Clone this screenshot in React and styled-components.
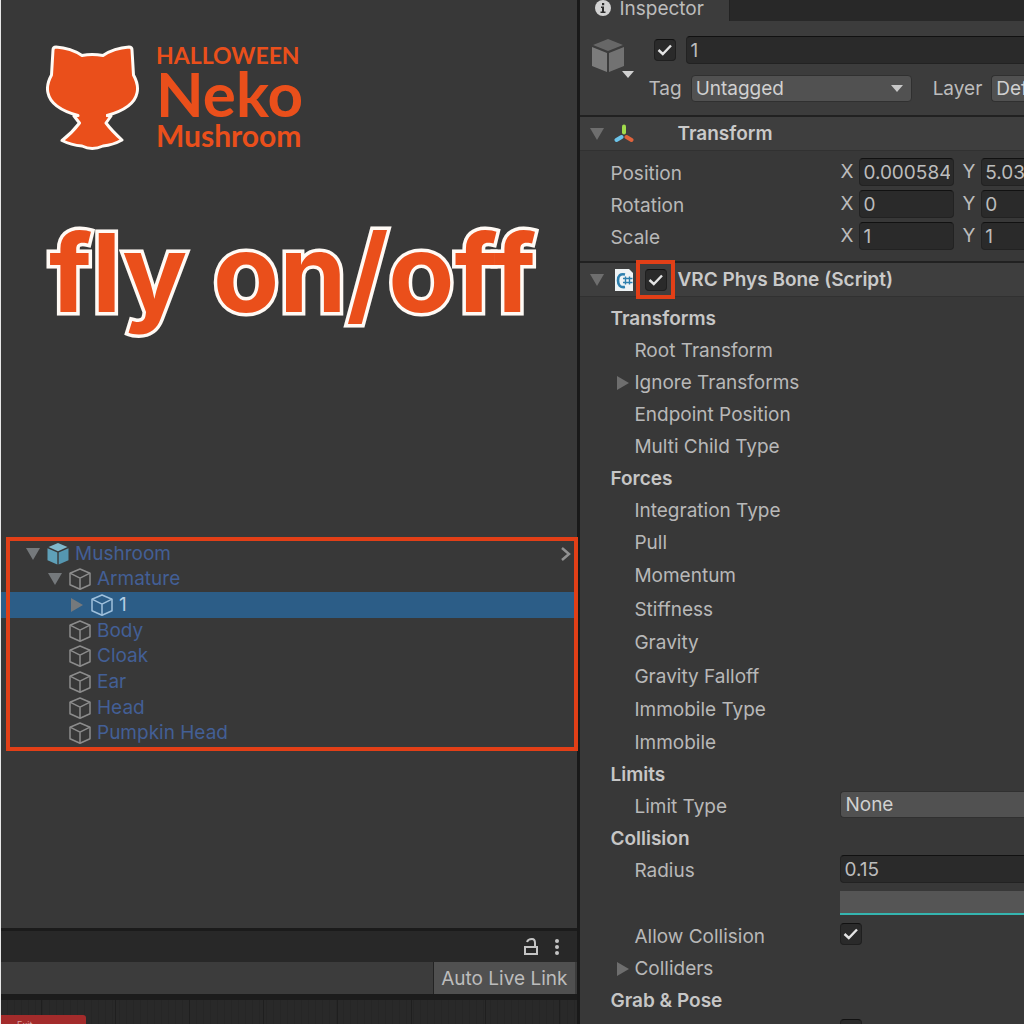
import styled, { createGlobalStyle, css } from 'styled-components'

const treeItems = [
  { name: 'Mushroom', level: 0, open: true, root: true },
  { name: 'Armature', level: 1, open: true },
  { name: '1', level: 2, closed: true, selected: true },
  { name: 'Body', level: 1 },
  { name: 'Cloak', level: 1 },
  { name: 'Ear', level: 1 },
  { name: 'Head', level: 1 },
  { name: 'Pumpkin Head', level: 1 },
]

const vectors = [
  { name: 'Position', x: '0.0005846', y: '5.03' },
  { name: 'Rotation', x: '0', y: '0' },
  { name: 'Scale', x: '1', y: '1' },
]

const properties = [
  { name: 'Transforms', title: true },
  { name: 'Root Transform' },
  { name: 'Ignore Transforms', fold: true },
  { name: 'Endpoint Position' },
  { name: 'Multi Child Type' },
  { name: 'Forces', title: true },
  { name: 'Integration Type' },
  { name: 'Pull' },
  { name: 'Momentum', height: 34 },
  { name: 'Stiffness', height: 33 },
  { name: 'Gravity', height: 34 },
  { name: 'Gravity Falloff', height: 33 },
  { name: 'Immobile Type', height: 34 },
  { name: 'Immobile' },
  { name: 'Limits', title: true },
  { name: 'Limit Type', field: 'select' },
  { name: 'Collision', title: true },
  { name: 'Radius', field: 'text' },
  { name: '', field: 'curve', height: 34 },
  { name: 'Allow Collision', field: 'check' },
  { name: 'Colliders', fold: true },
  { name: 'Grab & Pose', title: true },
  { name: '', field: 'check' },
]

const toId = (name) => name.toLowerCase().replace(/ /g, '-')

const Arrow = ({ open }) => (
  <ArrowSvg viewBox="0 0 14 14">
    <path d={open ? 'M0 1h14L7 13z' : 'M1 0v14l12-7z'} />
  </ArrowSvg>
)

const CubeOutline = () => (
  <CubeSvg viewBox="0 0 22 22" fill="none" stroke="currentColor" strokeWidth="1.500" strokeLinejoin="round">
    <path d="M11 1l10 4.200v11.500L11 21.200 1 16.700V5.200z" />
    <path d="M1 5.200l10 5 10-5M11 10.200v11" />
  </CubeSvg>
)

const CubeSolid = () => (
  <CubeSvg viewBox="0 0 22 22">
    <path fill="#7fb8cc" d="M11 0l9.500 4L11 8.300 1.500 4z" />
    <path fill="#5fa0b8" d="M.5 5.200l9.800 4.300v12L.5 17.300z" />
    <path fill="#5596b0" d="M21.500 5.200l-9.800 4.300v12l9.800-4.200z" />
  </CubeSvg>
)

const Check = (props) => (
  <CheckBox>
    <input type="checkbox" defaultChecked {...props} />
    <svg viewBox="0 0 22 22" fill="none" stroke="#e4e4e4" strokeWidth="2.400">
      <path d="M4.500 11l4.300 4L17 6.500" />
    </svg>
  </CheckBox>
)

const CatLogo = () => (
  <svg width="94" height="108" viewBox="0 0 94 108">
    <path
      d="M7 7Q7 4 10 4 25 5 36 12.500 46 10.500 57 12.500 68 5 83 4 86 4 86 7L87.500 32Q93 42 91 50 88 65 61 72.500L65 73 60 80Q66 88 76 97 67 102 57 103 46 108 36 103 25 102 16 97.500 26 90 33.500 80L28 73 32 72.500Q5 65 2 50 0 42 5.500 32z"
      fill="#ea4f1b"
      stroke="#fffaf5"
      strokeWidth="3"
      strokeLinejoin="round"
    />
    <path d="M34 68h26v9H34z" fill="#ea4f1b" />
  </svg>
)

const Field = ({ name, field }) => {
  const id = name ? toId(name) : undefined
  if (field === 'select') {
    return (
      <WideSelect id={id}>
        <option>None</option>
      </WideSelect>
    )
  }
  if (field === 'text') return <WideInput id={id} defaultValue="0.15" />
  if (field === 'curve') return <Curve type="button" aria-label="Radius curve" />
  if (field === 'check') return <Check id={id} aria-label={name ? undefined : 'Allow Grabbing'} />
  return null
}

const Hierarchy = () => (
  <Tree>
    {treeItems.map((item) => (
      <TreeRow key={item.name} $level={item.level} $selected={item.selected}>
        <ArrowSlot>{(item.open || item.closed) && <Arrow open={item.open} />}</ArrowSlot>
        {item.root ? <CubeSolid /> : <CubeOutline />}
        <TreeName $selected={item.selected}>{item.name}</TreeName>
        {item.root && (
          <Chevron viewBox="0 0 10 16" fill="none" stroke="#909090" strokeWidth="2.500">
            <path d="M1 2l7 6-7 6" />
          </Chevron>
        )}
      </TreeRow>
    ))}
    <TreeFrame />
  </Tree>
)

const Inspector = () => (
  <InspectorPanel>
    <TabBar>
      <Tab>
        <svg width="16" height="16" viewBox="0 0 16 16">
          <circle cx="8" cy="8" r="8" fill="#d2d2d2" />
          <path d="M6 6.500h3v5h1.500V13h-5v-1.500H7V8H6zM7 3h2.200v2.200H7z" fill="#2c2c2c" />
        </svg>
        Inspector
      </Tab>
    </TabBar>

    <ObjectHeader>
      <ObjectIcon width="44" height="42" viewBox="0 0 44 42">
        <path d="M16 1l15 6-15 6L1 7z" fill="#676767" />
        <path d="M0 9l15 6v19L0 28z" fill="#7c7c7c" />
        <path d="M32 9l-15 6v19l15-6z" fill="#727272" />
        <path d="M30 33h12l-6 7z" fill="#d0d0d0" />
      </ObjectIcon>
      <HeaderLines>
        <NameLine>
          <Check aria-label="Active" />
          <WideInput aria-label="Name" defaultValue="1" />
        </NameLine>
        <TagLine>
          <label htmlFor="tag">Tag</label>
          <TagSelect>
            <Select id="tag">
              <option>Untagged</option>
            </Select>
            <svg width="12" height="8" viewBox="0 0 12 8">
              <path d="M0 0h12L6 7z" fill="#c8c8c8" />
            </svg>
          </TagSelect>
          <label htmlFor="layer">Layer</label>
          <LayerSelect id="layer">
            <option>Default</option>
          </LayerSelect>
        </TagLine>
      </HeaderLines>
    </ObjectHeader>

    <ComponentBar>
      <Arrow open />
      <BarIcon viewBox="0 0 20 20" strokeWidth="4" strokeLinecap="round">
        <path d="M10 2.500v6" stroke="#a2dc4c" />
        <path d="M7.500 13L2.500 16" stroke="#6cc4ea" />
        <path d="M12.500 13l5 3" stroke="#e0633c" />
      </BarIcon>
      <CheckSlot />
      <h2>Transform</h2>
    </ComponentBar>
    <Vectors>
      {vectors.map((v) => (
        <Row key={v.name}>
          <Label>{v.name}</Label>
          <AxisLabel>
            X <VectorInput defaultValue={v.x} aria-label={`${v.name} X`} />
          </AxisLabel>
          <AxisLabel>
            Y <VectorInput defaultValue={v.y} aria-label={`${v.name} Y`} />
          </AxisLabel>
        </Row>
      ))}
    </Vectors>

    <ComponentBar>
      <Arrow open />
      <BarIcon viewBox="0 0 20 22">
        <path d="M1 0h14l4 4v18H1z" fill="#eef3f5" />
        <path d="M11 5.500Q4 4 4 11.500T11 18" fill="none" stroke="#2d7fae" strokeWidth="2.600" />
        <path d="M11.500 7.500v8M15.500 7.500v8M9 9.500h9.500M9 13.500h9.500" fill="none" stroke="#2d7fae" strokeWidth="1.400" />
      </BarIcon>
      <CheckSlot $marked>
        <Check aria-label="Enabled" />
      </CheckSlot>
      <h2>VRC Phys Bone (Script)</h2>
    </ComponentBar>
    <Properties>
      {properties.map((p, i) => (
        <Row key={i} $height={p.height}>
          <Label
            as={p.field && p.name ? 'label' : 'span'}
            htmlFor={p.field && p.name ? toId(p.name) : undefined}
            $title={p.title}
          >
            {p.fold && (
              <FoldSlot>
                <Arrow />
              </FoldSlot>
            )}
            {p.name}
          </Label>
          <Field {...p} />
        </Row>
      ))}
    </Properties>
  </InspectorPanel>
)

const App = () => {
  return (
    <Page>
      <GlobalStyle />
      <LeftPanel>
        <Brand>
          <CatLogo />
          <BrandText>
            <BrandLine $size={23} $line={24}>HALLOWEEN</BrandLine>
            <BrandLine $size={62} $line={52}>Neko</BrandLine>
            <BrandLine $size={30} $line={32}>Mushroom</BrandLine>
          </BrandText>
        </Brand>
        <Title>fly on/off</Title>
        <Hierarchy />
        <Animator>
          <AnimatorTabs>
            <svg width="14" height="18" viewBox="0 0 14 18" fill="none" stroke="#c4c4c4" strokeWidth="2">
              <path d="M1 9h12v7H1zM3 4q1-3 5-3 3 0 3 4v4" />
            </svg>
            <svg width="6" height="18" viewBox="0 0 6 18" fill="#c4c4c4">
              <circle cx="3" cy="3" r="2" />
              <circle cx="3" cy="9" r="2" />
              <circle cx="3" cy="15" r="2" />
            </svg>
          </AnimatorTabs>
          <AnimatorTools>
            <LiveLink type="button">Auto Live Link</LiveLink>
          </AnimatorTools>
          <Graph>
            <ExitNode>Exit</ExitNode>
          </Graph>
        </Animator>
      </LeftPanel>
      <Inspector />
    </Page>
  )
}
export default App

const GlobalStyle = createGlobalStyle`
  * {
    box-sizing: border-box;
  }
  body {
    margin: 0;
    background: #383838;
    color: #bcbcbc;
    font-family: Inter, 'Liberation Sans', sans-serif;
    font-size: 19px;
    line-height: 24px;
  }
  input, select, button {
    font: inherit;
    color: inherit;
    margin: 0;
  }
  svg {
    flex: none;
  }
`;
const Page = styled.main`
  display: grid;
  grid-template-columns: minmax(0, 145fr) minmax(0, 111fr);
  height: 100vh;
  overflow: hidden;
  border-left: 1px solid #e8e8e8;
`;
const LeftPanel = styled.section`
  display: flex;
  flex-direction: column;
  min-height: 0;
  border-right: 3px solid #191919;
`;
const Brand = styled.div`
  display: flex;
  gap: 16px;
  padding: 43px 45px 0;
`;
const BrandText = styled.div`
  color: #ea4f1b;
  font-family: Lato, sans-serif;
  font-weight: 700;
`;
const BrandLine = styled.div`
  font-size: ${(p) => p.$size}px;
  line-height: ${(p) => p.$line}px;
`;
const Title = styled.h1`
  margin: 58px 0 0;
  padding-left: 48px;
  color: #ea4f1b;
  font-size: 108px;
  line-height: 128px;
  font-weight: 700;
  font-variant-ligatures: none;
  white-space: nowrap;
  -webkit-text-stroke: 7px #fffaf5;
  paint-order: stroke fill;
  stroke-linejoin: round;
`;
const Tree = styled.div`
  position: relative;
  display: grid;
  grid-auto-rows: 1fr;
  height: 205px;
  margin-top: 204px;
`;
const TreeFrame = styled.div`
  position: absolute;
  inset: -4px -1px -5px 5px;
  border: 4px solid #e23f17;
  pointer-events: none;
`;
const TreeRow = styled.div`
  display: flex;
  align-items: center;
  padding-left: ${(p) => 25 + p.$level * 22}px;
  padding-right: 6px;
  color: ${(p) => (p.$selected ? '#9fc0dc' : '#8c8c8c')};
  background: ${(p) => (p.$selected ? '#2c5d87' : 'transparent')};
`;
const TreeName = styled.span`
  flex: 1;
  margin-left: 6px;
  color: ${(p) => (p.$selected ? '#b4cde2' : '#435f96')};
`;
const ArrowSlot = styled.span`
  display: flex;
  width: 21px;
`;
const ArrowSvg = styled.svg`
  width: 14px;
  height: 14px;
  fill: #6e6e6e;
  ${TreeRow} & {
    fill: #75797c;
  }
`;
const CubeSvg = styled.svg`
  width: 22px;
  height: 22px;
`;
const Chevron = styled.svg`
  width: 10px;
  height: 16px;
`;
const Animator = styled.div`
  display: grid;
  grid-template-rows: 31px 32px 30px;
  margin-top: auto;
  border-top: 3px solid #1b1b1b;
`;
const AnimatorTabs = styled.div`
  display: flex;
  justify-content: flex-end;
  align-items: center;
  gap: 16px;
  padding-right: 17px;
  background: #282828;
`;
const AnimatorTools = styled.div`
  display: flex;
  justify-content: flex-end;
  padding-right: 2px;
  background: #3c3c3c;
`;
const LiveLink = styled.button`
  padding: 2px 8px 0 7px;
  border: 0;
  border-left: 1px solid #232323;
  background: #505050;
`;
const Graph = styled.div`
  overflow: hidden;
  padding-top: 15px;
  border-top: 6px solid #1c1c1c;
  background:
    repeating-linear-gradient(90deg, transparent 0 40px, #1f1f1f 40px 41px, transparent 41px 74px),
    repeating-linear-gradient(90deg, #292929 0 6px, #262626 6px 7px);
`;
const ExitNode = styled.div`
  width: 85px;
  height: 24px;
  padding: 4px 16px;
  border-radius: 0 3px 0 0;
  background: #a32b2b;
  color: #d6a0a0;
  font-size: 9px;
  line-height: 12px;
`;
const InspectorPanel = styled.section`
  min-width: 0;
  overflow: hidden;
`;
const TabBar = styled.div`
  display: flex;
  height: 21px;
  background: #282828;
`;
const Tab = styled.div`
  display: flex;
  gap: 8px;
  width: 150px;
  padding-left: 15px;
  background: #3c3c3c;
  border-right: 1px solid #222;
  line-height: 17px;
`;
const fieldBox = css`
  height: 28px;
  border: 1px solid #222;
  border-top-color: #111;
  border-radius: 4px;
  background: #2a2a2a;
  padding: 0 3px;
  outline: 0;
`;
const WideInput = styled.input`
  ${fieldBox}
  flex: 1;
  min-width: 0;
  border-right: 0;
  border-radius: 4px 0 0 4px;
`;
const Select = styled.select`
  appearance: none;
  width: 100%;
  height: 27px;
  padding: 0 4px;
  border: 1px solid #303030;
  border-radius: 4px;
  background: #515151;
  color: #d0d0d0;
`;
const WideSelect = styled(Select)`
  flex: 1;
  min-width: 0;
  border-right: 0;
  border-radius: 4px 0 0 4px;
`;
const LayerSelect = styled(WideSelect)`
  padding-right: 0;
  text-overflow: clip;
`;
const CheckBox = styled.span`
  position: relative;
  display: flex;
  width: 22px;
  height: 22px;
  input {
    appearance: none;
    width: 100%;
    height: 100%;
    border: 1px solid #1f1f1f;
    border-top-color: #111;
    border-radius: 4px;
    background: #2a2a2a;
  }
  svg {
    position: absolute;
    inset: 0;
    pointer-events: none;
  }
  input:not(:checked) + svg {
    display: none;
  }
`;
const ObjectHeader = styled.header`
  display: flex;
  height: 94px;
  padding: 15px 0 0 12px;
  background: #3c3c3c;
`;
const ObjectIcon = styled.svg`
  margin-top: 2px;
`;
const HeaderLines = styled.div`
  flex: 1;
  min-width: 0;
  padding-left: 12px;
`;
const NameLine = styled.div`
  display: flex;
  align-items: center;
  gap: 10px;
  padding-left: 6px;
`;
const TagLine = styled.div`
  display: flex;
  align-items: center;
  gap: 9px;
  margin-top: 11px;
`;
const TagSelect = styled.div`
  position: relative;
  flex: none;
  width: 221px;
  margin-right: 12px;
  svg {
    position: absolute;
    top: 10px;
    right: 9px;
    pointer-events: none;
  }
`;
const ComponentBar = styled.div`
  display: flex;
  align-items: center;
  height: 36px;
  padding-left: 10px;
  border-top: 2px solid #212121;
  border-bottom: 1px solid #313131;
  background: #3e3e3e;
  h2 {
    margin: 0;
    color: #cacaca;
    font-size: 19px;
    font-weight: 600;
    white-space: nowrap;
  }
`;
const BarIcon = styled.svg`
  width: 20px;
  height: 22px;
  margin-left: 10px;
`;
const CheckSlot = styled.span`
  display: flex;
  flex: none;
  align-items: center;
  justify-content: center;
  width: 39px;
  height: 39px;
  margin: 0 2px;
  border: 4px solid ${(p) => (p.$marked ? '#e23f17' : 'transparent')};
`;
const Vectors = styled.div`
  padding: 7px 0 7px 30px;
`;
const Properties = styled.div`
  padding: 6px 0 0 30px;
`;
const Row = styled.div`
  display: flex;
  align-items: flex-start;
  height: ${(p) => p.$height || 32}px;
  ${Properties} & > ${CheckBox} {
    margin-top: 2px;
  }
`;
const Label = styled.span`
  display: flex;
  flex: none;
  align-items: center;
  width: 230px;
  height: 100%;
  white-space: nowrap;
  font-weight: ${(p) => (p.$title ? 600 : 400)};
  color: ${(p) => (p.$title ? '#c6c6c6' : '#b8b8b8')};
  ${Properties} & {
    padding-left: ${(p) => (p.$title ? 0 : 24)}px;
  }
`;
const FoldSlot = styled.span`
  display: flex;
  width: 18px;
  margin-left: -18px;
`;
const AxisLabel = styled.label`
  display: flex;
  flex: none;
  align-items: center;
  gap: 6px;
  margin-right: 8px;
`;
const VectorInput = styled.input`
  ${fieldBox}
  width: 95px;
`;
const Curve = styled.button`
  flex: 1;
  height: 24px;
  margin-top: 4px;
  border: 0;
  border-bottom: 2px solid #35b5b0;
  background: #555;
`;
